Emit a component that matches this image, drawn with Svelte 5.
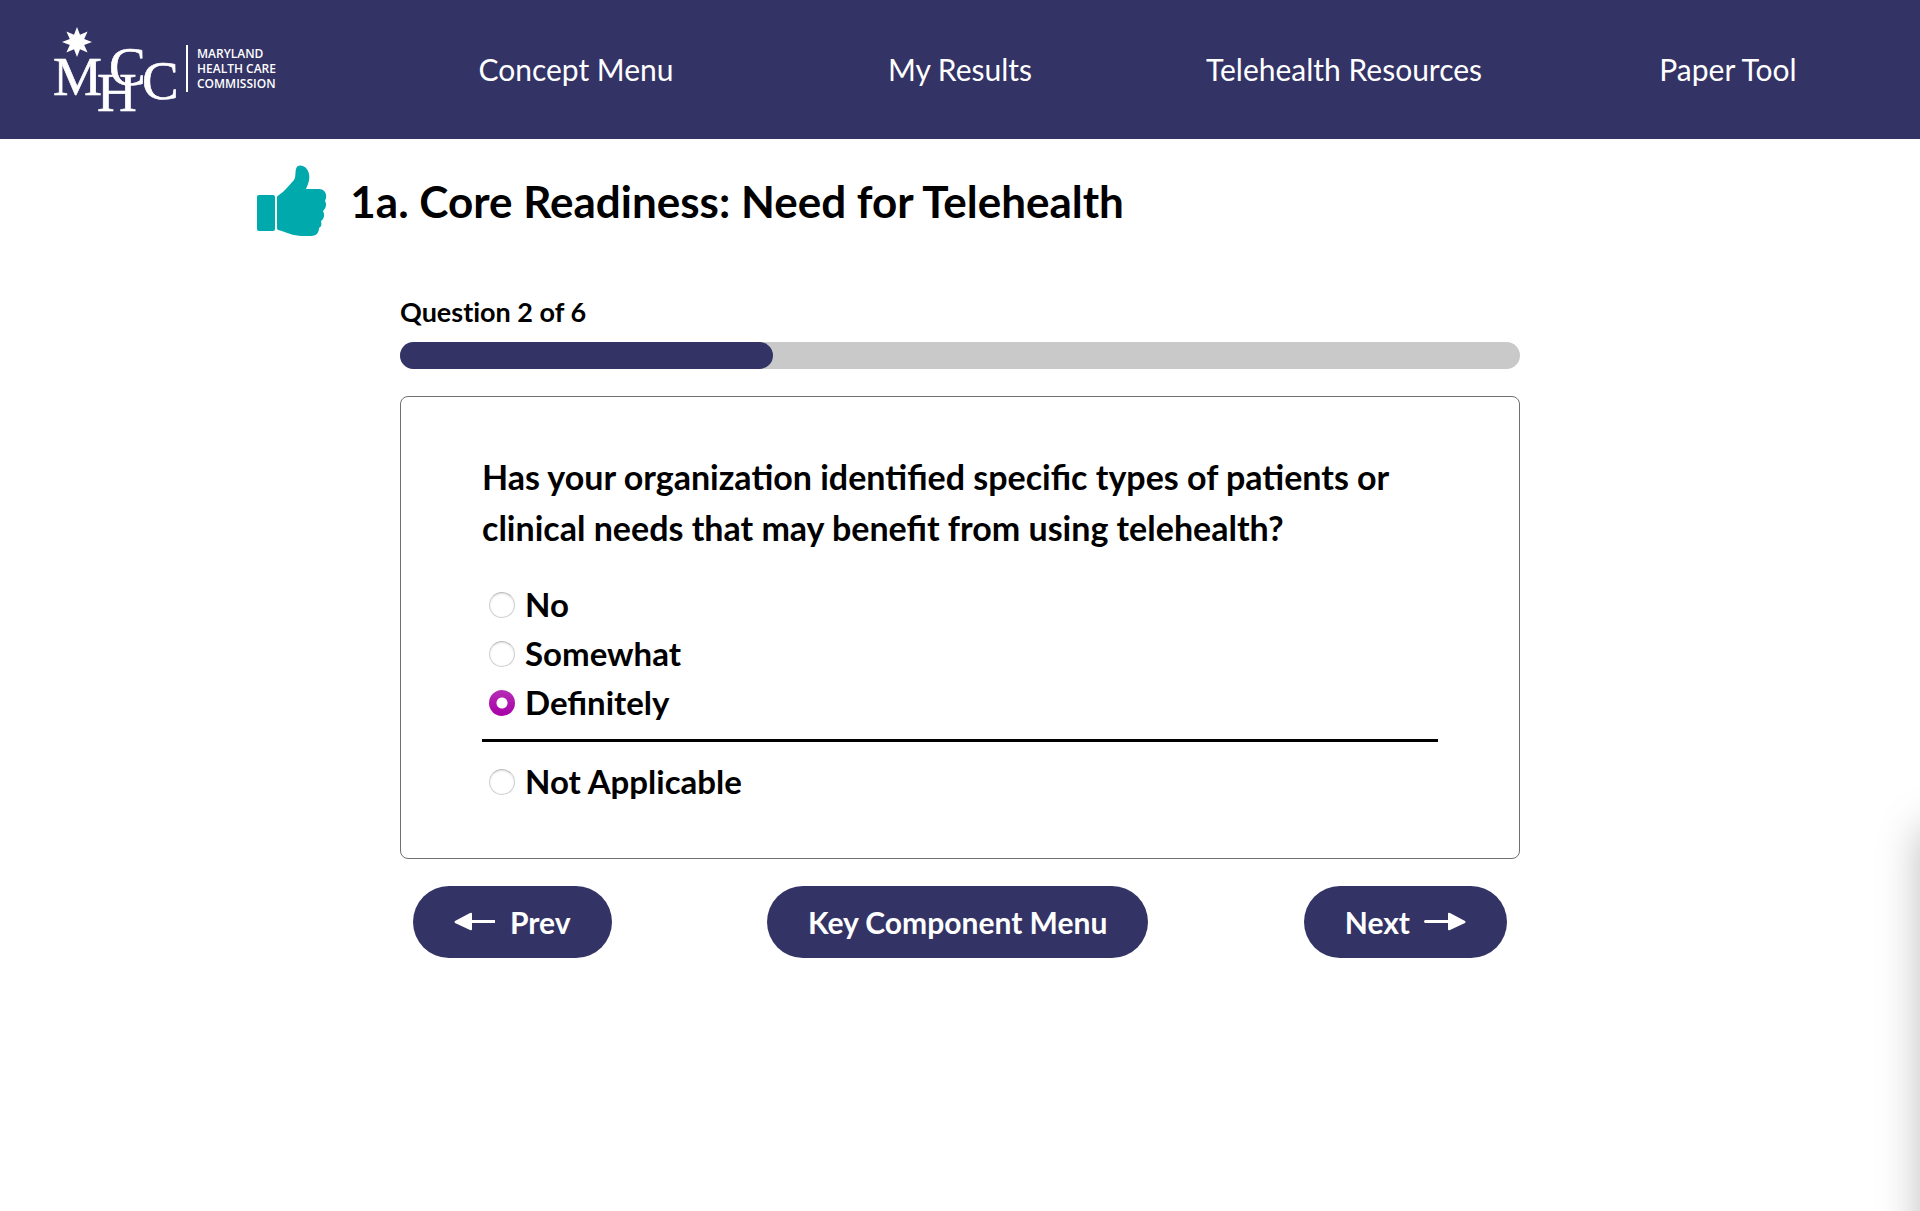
<script>
  const navLinks = [
    "Concept Menu",
    "My Results",
    "Telehealth Resources",
    "Paper Tool",
  ];

  const answers = ["No", "Somewhat", "Definitely"];

  let selected = "Definitely";
  let current = 2;
  let total = 6;

  //how much of the bar is filled in
  $: progress = (current / total) * 100;

  const prevQuestion = () => {
    if (current > 1) current -= 1;
  };

  const nextQuestion = () => {
    if (current < total) current += 1;
  };
</script>

<div class="page">
  <header>
    <a class="logo" href="/" aria-label="Maryland Health Care Commission">
      <svg width="232" height="92" viewBox="50 24 232 92" fill="#fff">
        <path
          d="M77 27 L80 34.8 L87.6 31.4 L84.2 39 L92 42 L84.2 45 L87.6 52.6 L80 49.2 L77 57 L74 49.2 L66.4 52.6 L69.8 45 L62 42 L69.8 39 L66.4 31.4 L74 34.8 Z"
        />
        <g class="letters">
          <text x="53" y="95">M</text>
          <text x="109" y="85">C</text>
          <text x="97" y="111">H</text>
          <text x="142" y="99">C</text>
        </g>
        <rect x="186" y="45" width="2" height="47" />
        <g class="words">
          <text x="197" y="58">MARYLAND</text>
          <text x="197" y="73">HEALTH CARE</text>
          <text x="197" y="88">COMMISSION</text>
        </g>
      </svg>
    </a>
    <nav>
      {#each navLinks as link}
        <a href="#top">{link}</a>
      {/each}
    </nav>
  </header>

  <div class="title">
    <svg width="70" height="72" viewBox="0 0 70 72" fill="#00a9ab">
      <rect x="0" y="30" width="18" height="36" rx="2" />
      <path
        d="M20 32 Q20 31 22 30 C28 26 32 20 37 15 C39 12 38 8 39 4 C40 -1 46 0 49 3 C53 7 53 14 51 19 L49 24 H62 C68 24 71 30 68 36 C70 39 69 43 66 46 C68 50 67 54 64 56 C65 60 64 62 62 63 C62 68 59 71 54 71 H45 C36 71 29 67 21 65 Q20 64 20 63 Z"
      />
    </svg>
    <h1>1a. Core Readiness: Need for Telehealth</h1>
  </div>

  <main>
    <p class="count" id="count">Question {current} of {total}</p>
    <div
      class="bar"
      role="progressbar"
      aria-labelledby="count"
      aria-valuemin="0"
      aria-valuemax={total}
      aria-valuenow={current}
    >
      <div class="fill" style="width: {progress}%"></div>
    </div>

    <fieldset>
      <legend>
        Has your organization identified specific types of patients or clinical
        needs that may benefit from using telehealth?
      </legend>
      {#each answers as answer}
        <label>
          <input type="radio" name="answer" value={answer} bind:group={selected} />
          {answer}
        </label>
      {/each}
      <hr />
      <label>
        <input type="radio" name="answer" value="na" bind:group={selected} />
        Not Applicable
      </label>
    </fieldset>

    <div class="buttons">
      <button on:click={prevQuestion}>
        <svg width="42" height="20" viewBox="0 0 42 20" fill="#fff">
          <path d="M1 9 L16 1 Q18 0 18 2 V8 H41 V11 H18 V17 Q18 19 16 18 L1 11 Q0 10 1 9 Z" />
        </svg>
        Prev
      </button>
      <button>Key Component Menu</button>
      <button on:click={nextQuestion}>
        Next
        <svg width="42" height="20" viewBox="0 0 42 20" fill="#fff">
          <path d="M41 9 L26 1 Q24 0 24 2 V8 H1 Q-1 9.5 1 11 H24 V17 Q24 19 26 18 L41 11 Q42 10 41 9 Z" />
        </svg>
      </button>
    </div>
  </main>

  <aside class="drawer"></aside>
</div>

<style>
  :global(body) {
    margin: 0;
    background: #fff;
  }
  .page {
    position: relative;
    box-sizing: border-box;
    min-height: 100vh;
    overflow: hidden;
    font-family: Lato, "Liberation Sans", sans-serif;
    color: #000;
  }
  header {
    display: flex;
    align-items: center;
    background: #333366;
    padding: 24px 0;
  }
  .logo {
    box-sizing: border-box;
    width: 20%;
    height: 91px;
    padding-left: 50px;
  }
  .logo svg {
    display: block;
    overflow: visible;
  }
  .letters {
    font-family: "Liberation Serif", serif;
    font-size: 55px;
    stroke: #fff;
    stroke-width: 0.6;
  }
  .words {
    font-family: "Open Sans", sans-serif;
    font-size: 12px;
    font-weight: 600;
  }
  nav {
    display: flex;
    flex: 1;
    padding-bottom: 2px;
  }
  nav a {
    flex: 1;
    text-align: center;
    font-size: 30px;
    line-height: 40px;
    color: #fff;
    text-decoration: none;
  }
  .title {
    display: flex;
    align-items: center;
    gap: 23px;
    width: 73.2%;
    margin: 26px auto 0;
  }
  h1 {
    margin: 0;
    font-size: 44px;
    font-weight: 700;
    line-height: 72px;
  }
  main {
    width: calc(100% * 7 / 12);
    margin: 56px auto 0;
  }
  .count {
    margin: 0 0 11px;
    font-size: 27px;
    font-weight: 700;
    line-height: 38px;
    font-variant-ligatures: none;
  }
  .bar {
    height: 27px;
    border-radius: 14px;
    background: #c9c9c9;
  }
  .fill {
    height: 100%;
    border-radius: 14px;
    background: #333366;
  }
  fieldset {
    margin: 27px 0;
    padding: 54px 81px 52px;
    border: 1px solid #707070;
    border-radius: 8px;
  }
  legend {
    float: left;
    width: 100%;
    margin-bottom: 27px;
    padding: 0;
    font-size: 34px;
    font-weight: 700;
    line-height: 51px;
  }
  label {
    display: flex;
    clear: both;
    align-items: center;
    gap: 10px;
    padding-left: 7px;
    font-size: 33px;
    font-weight: 700;
    line-height: 49px;
  }
  input {
    appearance: none;
    width: 26px;
    height: 26px;
    margin: 0;
    border: 1px solid #d0d0d0;
    border-top-color: #bbb;
    border-radius: 50%;
    background: #fff;
    box-shadow: inset 0 1px 2px rgba(0, 0, 0, 0.12);
  }
  input:checked {
    border: 0;
    background: radial-gradient(circle, #fff 5px, transparent 6px),
      linear-gradient(#b52fb5, #a800a8);
    box-shadow: none;
  }
  hr {
    height: 3px;
    margin: 12px 0 15px;
    border: 0;
    background: #000;
  }
  .buttons {
    display: flex;
    justify-content: space-between;
    padding: 0 13px;
  }
  button {
    display: flex;
    align-items: center;
    gap: 14px;
    padding: 0 41px;
    border: 0;
    border-radius: 36px;
    background: #333366;
    color: #fff;
    font-family: inherit;
    font-size: 30px;
    font-weight: 700;
    line-height: 72px;
    cursor: pointer;
  }
  .drawer {
    position: absolute;
    top: 828px;
    bottom: -60px;
    left: 100%;
    width: 300px;
    box-shadow: 0 0 40px rgba(0, 0, 0, 0.26);
  }
</style>
